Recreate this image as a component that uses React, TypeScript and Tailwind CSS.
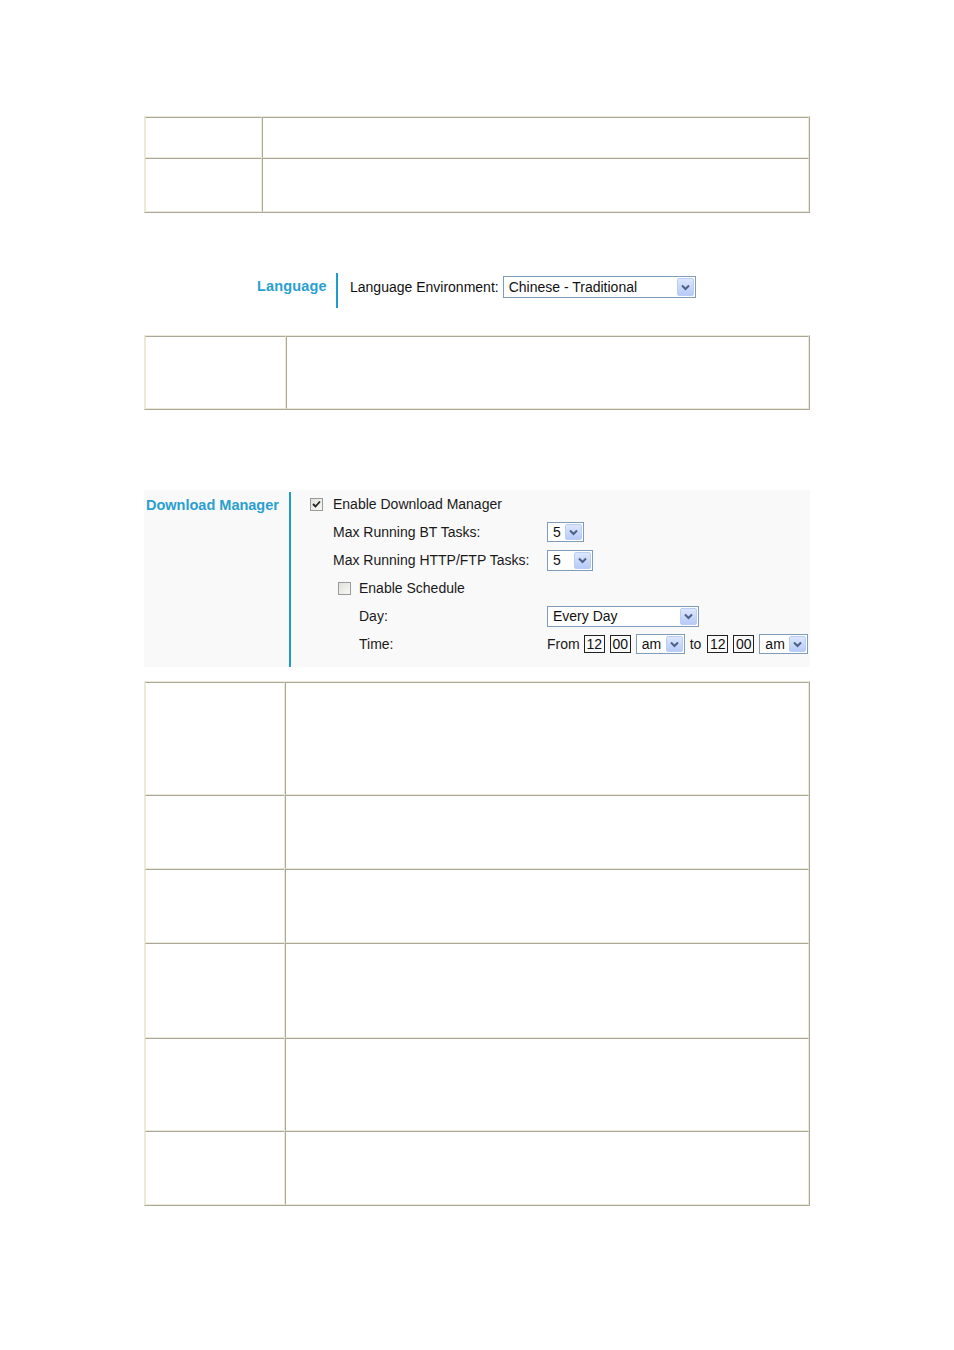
import React from 'react';

const font = { fontFamily: '"Liberation Sans", Arial, sans-serif' };

function Table({ col, rows }: { col: number; rows: number[] }) {
  return (
    <div className="border-t border-l border-t-[#ece9d8] border-l-[#ece9d8] border-r border-b border-r-[#aca899] border-b-[#aca899] bg-white">
      {rows.map((h, i) => (
        <div key={i} className="flex" style={{ height: h }}>
          <div
            className="border-t border-t-[#aca899] border-l border-l-[#ece9d8] border-b border-b-[#ece9d8] border-r border-r-[#ece9d8]"
            style={{ width: col }}
          />
          <div className="flex-1 border-t border-t-[#aca899] border-l border-l-[#aca899] border-b border-b-[#ece9d8] border-r border-r-[#ece9d8]" />
        </div>
      ))}
    </div>
  );
}

function Arrow() {
  return (
    <div className="h-full w-[17px] rounded-[2px] border border-[#b9cdf5] bg-gradient-to-b from-[#dce6fd] to-[#b7cbf8] flex items-center justify-center">
      <svg width="9" height="7" viewBox="0 0 9 7">
        <path d="M1 1.5 L4.5 5 L8 1.5" fill="none" stroke="#4d6185" strokeWidth="2" />
      </svg>
    </div>
  );
}

function Select({ value, w, h }: { value: string; w: number; h: number }) {
  return (
    <div
      className="flex items-center border border-[#7f9db9] bg-white p-[1px]"
      style={{ width: w, height: h }}
    >
      <span className="flex-1 pl-[4px] text-[14px] leading-none text-[#111]">{value}</span>
      <Arrow />
    </div>
  );
}

function Check({ checked }: { checked?: boolean }) {
  return (
    <div className="w-[13px] h-[13px] border border-[#9a9a9a] bg-gradient-to-br from-[#e2e2dc] to-[#f8f8f6] flex items-center justify-center">
      {checked && (
        <svg width="9" height="9" viewBox="0 0 9 9">
          <path d="M1 4 L3.5 6.5 L8 1.5" fill="none" stroke="#222" strokeWidth="1.8" />
        </svg>
      )}
    </div>
  );
}

function Box({ v }: { v: string }) {
  return (
    <span className="inline-flex items-center justify-center w-[21px] h-[18px] border border-[#222] text-[14px] leading-none text-[#111]">
      {v}
    </span>
  );
}

export default function App() {
  return (
    <div className="min-h-[1350px] bg-white pt-[116px]" style={font}>
      <div className="w-[666px] mx-auto">
        {/* first table */}
        <Table col={117} rows={[41, 54]} />

        {/* Language */}
        <div className="mt-[60px] flex items-start h-[35px] pl-[113px]">
          <div className="h-[28px] w-[79px] flex items-center text-[14.5px] font-bold tracking-[0.15px] text-[#2a9fd0]">
            Language
          </div>
          <div className="w-[2px] h-full bg-[#1e9bcf]" />
          <div className="h-[28px] flex items-center">
            <span className="ml-[12px] text-[14px] text-[#111]">Language Environment:</span>
            <div className="ml-[4px]">
              <Select value="Chinese - Traditional" w={193} h={22} />
            </div>
          </div>
        </div>

        {/* second table */}
        <div className="mt-[27px]">
          <Table col={141} rows={[73]} />
        </div>

        {/* Download Manager */}
        <div className="mt-[80px] flex bg-[#f9f9f9] h-[177px]">
          <div className="w-[145px] pl-[2px] pt-[5px] text-[14.5px] font-bold text-[#2a9fd0]">Download Manager</div>
          <div className="w-[2px] mt-[2px] bg-[#1e9bcf]" />
          <div className="flex-1 pl-[19px] text-[14px] text-[#1a1a1a]">
            <div className="h-[28px] flex items-center gap-[10px]">
              <Check checked />
              <span>Enable Download Manager</span>
            </div>
            <div className="h-[28px] flex items-center pl-[23px]">
              <span className="w-[214px]">Max Running BT Tasks:</span>
              <Select value="5" w={37} h={20} />
            </div>
            <div className="h-[28px] flex items-center pl-[23px]">
              <span className="w-[214px]">Max Running HTTP/FTP Tasks:</span>
              <Select value="5" w={46} h={21} />
            </div>
            <div className="h-[28px] flex items-center gap-[8px] pl-[28px]">
              <Check />
              <span>Enable Schedule</span>
            </div>
            <div className="h-[28px] flex items-center pl-[49px]">
              <span className="w-[188px]">Day:</span>
              <Select value="Every Day" w={152} h={21} />
            </div>
            <div className="h-[28px] flex items-center pl-[49px]">
              <span className="w-[188px]">Time:</span>
              <span className="mr-[4px]">From</span>
              <Box v="12" />
              <span className="w-[5px]" />
              <Box v="00" />
              <span className="w-[5px]" />
              <Select value="am" w={49} h={20} />
              <span className="ml-[5px] mr-[6px]">to</span>
              <Box v="12" />
              <span className="w-[5px]" />
              <Box v="00" />
              <span className="w-[5px]" />
              <Select value="am" w={49} h={20} />
            </div>
          </div>
        </div>

        {/* third table */}
        <div className="mt-[14px]">
          <Table col={140} rows={[113, 74, 74, 95, 93, 74]} />
        </div>
      </div>
    </div>
  );
}
